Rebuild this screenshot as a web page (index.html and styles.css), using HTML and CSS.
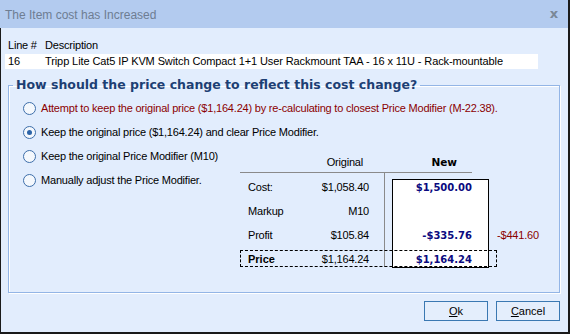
FILE: index.html
```html
<!DOCTYPE html>
<html lang="en">
<head>
    <meta charset="UTF-8">
    <title>The Item cost has Increased</title>
    <link rel="stylesheet" href="styles.css">
</head>
<body>

    <div class="window">
        <div class="titlebar">
            <span class="title">The Item cost has Increased</span>
            <span class="close">x</span>
        </div>

        <div class="content">
            <div class="line-head">
                <span class="col-line">Line #</span>
                <span>Description</span>
            </div>
            <div class="line-row">
                <span class="col-line">16</span>
                <span>Tripp Lite Cat5 IP KVM Switch Compact 1+1 User Rackmount TAA - 16 x 11U - Rack-mountable</span>
            </div>

            <fieldset class="group">
                <legend>How should the price change to reflect this cost change?</legend>

                <label class="option warn"><input type="radio" name="mode"> Attempt to keep the original price ($1,164.24) by re-calculating to closest Price Modifier (M-22.38).</label>
                <label class="option"><input type="radio" name="mode" checked> Keep the original price ($1,164.24) and clear Price Modifier.</label>

                <div class="split">
                    <div class="left-opts">
                        <label class="option"><input type="radio" name="mode"> Keep the original Price Modifier (M10)</label>
                        <label class="option"><input type="radio" name="mode"> Manually adjust the Price Modifier.</label>
                    </div>

                    <div class="compare">
                        <div class="head-line"></div>
                        <div class="h-orig">Original</div>
                        <div class="h-new">New</div>

                        <div class="divider"></div>
                        <div class="new-box"></div>
                        <div class="focus"></div>

                        <div class="lbl r1">Cost:</div>
                        <div class="orig r1">$1,058.40</div>
                        <div class="new r1">$1,500.00</div>

                        <div class="lbl r2">Markup</div>
                        <div class="orig r2">M10</div>

                        <div class="lbl r3">Profit</div>
                        <div class="orig r3">$105.84</div>
                        <div class="new r3">-$335.76</div>
                        <div class="diff r3">-$441.60</div>

                        <div class="lbl r4 strong">Price</div>
                        <div class="orig r4">$1,164.24</div>
                        <div class="new r4">$1,164.24</div>
                    </div>
                </div>
            </fieldset>

            <div class="buttons">
                <button type="button"><u>O</u>k</button>
                <button type="button"><u>C</u>ancel</button>
            </div>
        </div>
    </div>

</body>
</html>
```

FILE: styles.css
```css
body {
    margin: 0;
    font-family: "Liberation Sans", Arial, sans-serif;
    font-size: 11px;
    letter-spacing: -0.2px;
    color: #000;
}
.window {
    width: 570px;
    height: 334px;
    display: flex;
    flex-direction: column;
    background-color: #e2edfd;
}
.titlebar {
    height: 28px;
    flex: none;
    display: flex;
    align-items: center;
    justify-content: space-between;
    padding: 0 10px 0 5px;
    background-color: #b3cbef;
    border-right: 2px solid #1a1a1a;
}
.title {
    font-size: 12px;
    letter-spacing: 0;
    color: #6e7d92;
    padding-top: 2px;
}
.close {
    font-family: "DejaVu Sans", sans-serif;
    font-weight: bold;
    font-size: 13px;
    color: #7a8797;
    padding-bottom: 2px;
}
.content {
    flex: 1;
    border-left: 1px solid #1a1a1a;
    border-right: 2px solid #1a1a1a;
    border-bottom: 2px solid #1a1a1a;
}
.line-head,
.line-row {
    display: flex;
    height: 15px;
    line-height: 15px;
    padding-left: 7px;
    white-space: nowrap;
}
.line-head {
    margin-top: 10px;
}
.line-row {
    margin: 1px 30px 0 4px;
    padding-left: 3px;
    letter-spacing: -0.1px;
    background-color: #fff;
}
.col-line {
    width: 37px;
}
.group {
    margin: 8px 8px 0 7px;
    padding: 0 0 0 4px;
    height: 214px;
    border: 1px solid #93b5e6;
    box-shadow: inset 1px 1px 0 #fff, 1px 1px 0 #fff;
}
.group legend {
    height: 16px;
    line-height: 16px;
    padding: 0 3px;
    font-family: "DejaVu Sans", sans-serif;
    font-size: 12.5px;
    letter-spacing: 0;
    font-weight: bold;
    color: #1d3f74;
}
.option {
    display: flex;
    align-items: center;
    height: 24px;
    padding-left: 10px;
    white-space: nowrap;
}
.group > .option:first-of-type {
    margin-top: 3px;
}
.option.warn {
    color: #8b0000;
}
.option input {
    appearance: none;
    width: 13px;
    height: 13px;
    margin: 0 5px 0 0;
    border: 1px solid #3d6eaa;
    border-radius: 50%;
    background-color: #f4f8fd;
    display: grid;
    place-content: center;
}
.option input:checked::before {
    content: "";
    width: 5px;
    height: 5px;
    border-radius: 50%;
    background-color: #2c64a8;
}
.split {
    display: flex;
}
.left-opts {
    width: 227px;
    flex: none;
}
.compare {
    margin-top: 6px;
    display: grid;
    grid-template-columns: 60px 85px 112px 45px;
    grid-template-rows: 23px 2px repeat(4, 24px);
    align-items: center;
}
.head-line {
    grid-column: 1 / 4;
    grid-row: 1;
    align-self: stretch;
    margin-right: 25px;
    border-bottom: 1px solid #8a8a8a;
}
.h-orig {
    grid-column: 2;
    grid-row: 1;
    text-align: right;
    padding-right: 22px;
}
.h-new {
    grid-column: 3;
    grid-row: 1;
    text-align: right;
    padding-right: 40px;
    font-weight: bold;
    font-family: "DejaVu Sans", sans-serif;
    font-size: 10.5px;
    letter-spacing: 0;
}
.divider {
    grid-column: 2;
    grid-row: 2 / 7;
    align-self: stretch;
    margin-bottom: 4px;
    border-right: 1px solid #8a8a8a;
}
.new-box {
    grid-column: 3;
    grid-row: 3 / 7;
    align-self: stretch;
    margin: 4px 8px 3px 7px;
    background-color: #fff;
    border: 1px solid #000;
}
.focus {
    grid-column: 1 / 4;
    grid-row: 6;
    align-self: stretch;
    margin: 3px 0 4px 0;
    border: 1px dashed #000;
}
.r1 { grid-row: 3; }
.r2 { grid-row: 4; }
.r3 { grid-row: 5; }
.r4 { grid-row: 6; }
.lbl {
    grid-column: 1;
    padding-left: 8px;
}
.lbl.strong {
    font-weight: bold;
    letter-spacing: 0;
}
.orig {
    grid-column: 2;
    text-align: right;
    padding-right: 16px;
}
.new {
    grid-column: 3;
    text-align: right;
    padding-right: 25px;
    font-family: "DejaVu Sans", sans-serif;
    font-size: 10px;
    letter-spacing: 0;
    font-weight: bold;
    color: #0a0a80;
}
.diff {
    grid-column: 4;
    color: #8b0000;
    white-space: nowrap;
}
.buttons {
    display: flex;
    justify-content: flex-end;
    gap: 8px;
    padding: 8px 8px 0 0;
}
.buttons button {
    width: 64px;
    height: 20px;
    padding: 0;
    font-family: "Liberation Sans", Arial, sans-serif;
    font-size: 11px;
    color: #000;
    background-color: #e4eefc;
    border: 1px solid #3a78b2;
}
```
